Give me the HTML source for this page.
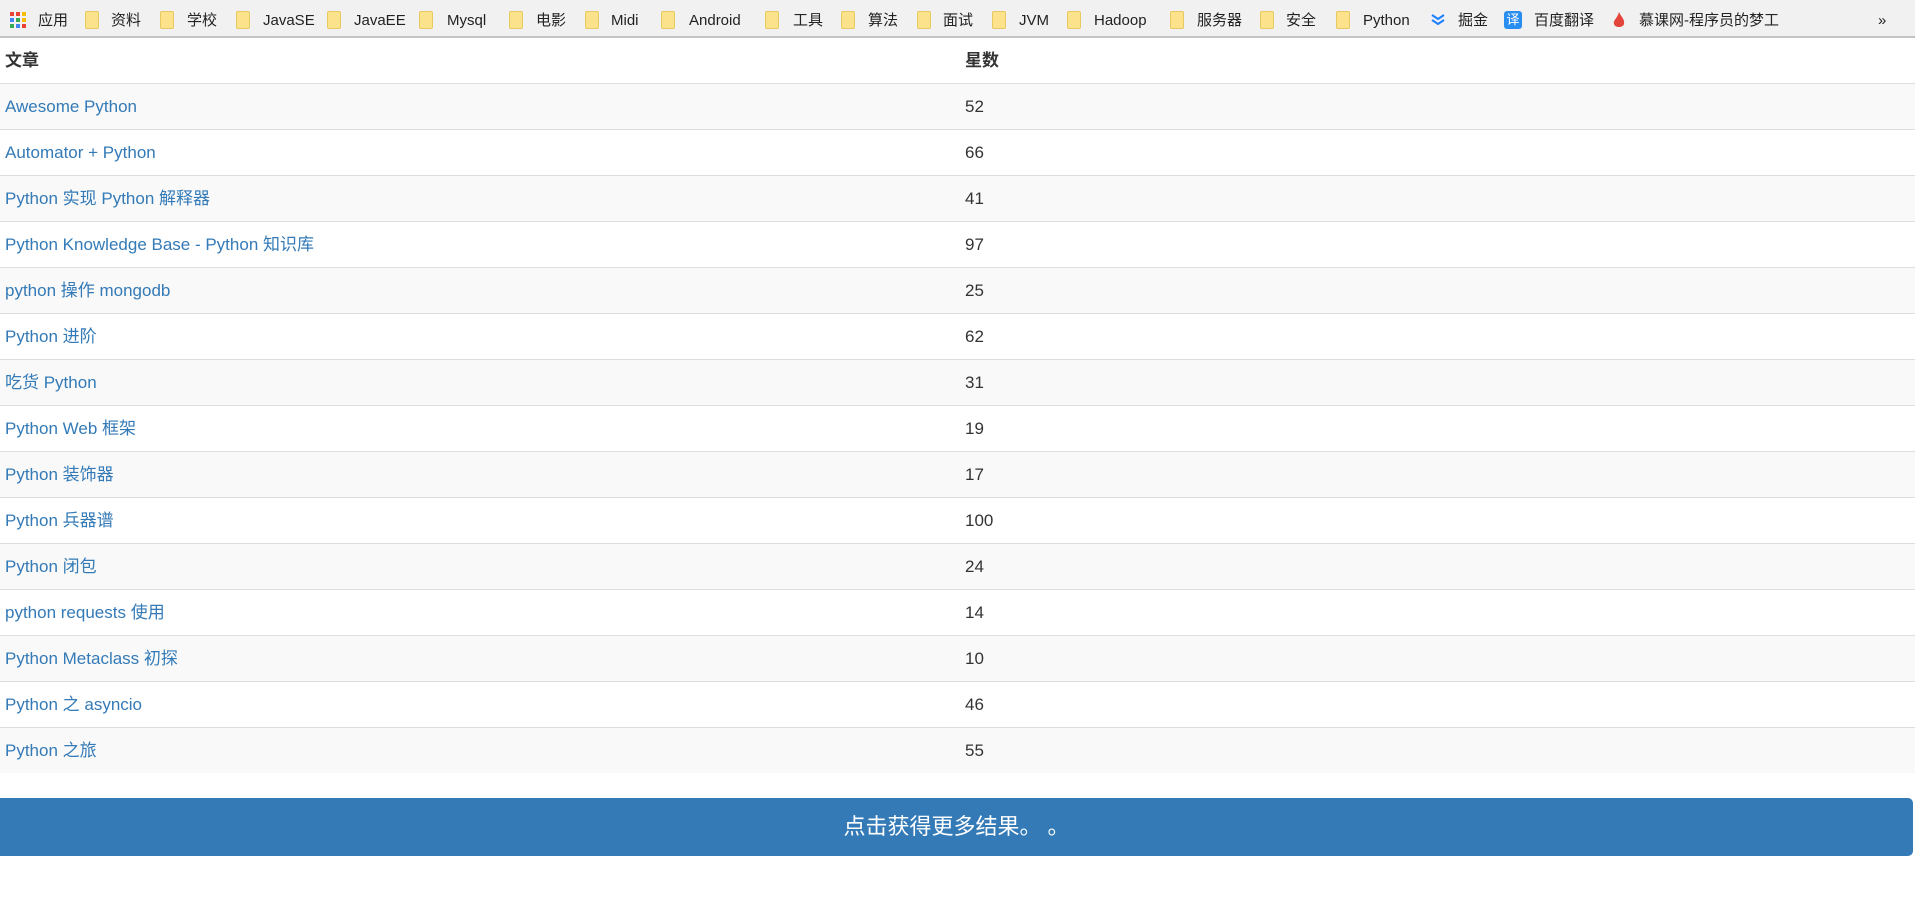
<!DOCTYPE html>
<html><head><meta charset="utf-8"><style>
*{margin:0;padding:0;box-sizing:border-box}
body{width:1915px;height:905px;background:#fff;font-family:"Liberation Sans","Noto Sans CJK SC",sans-serif;overflow:hidden;position:relative}
#bar{position:absolute;left:0;top:0;width:1915px;height:38px;background:#f1f1f1;border-bottom:2px solid #c4c4c4}
#bar span{position:absolute;top:11px;font-size:15px;color:#222;line-height:20px;height:20px;white-space:nowrap}
#bar i{position:absolute;top:11px;width:14px;height:18px;background:#fce28a;border:1px solid #e8c860;border-radius:2px}
.tbl{position:absolute;left:0;top:38px;width:1915px;font-size:17px}
.r{position:relative;height:46px;border-top:1px solid #ddd}
.r.h{height:45px;border-top:none;font-weight:bold;color:#333}
.r.g{background:#f9f9f9}
.c1,.c2{position:absolute;top:13px;height:20px;line-height:20px;white-space:nowrap}
.c1{left:5px;color:#337ab7}
.c2{left:965px;color:#333}
.h .c1{color:#333}
#btn{position:absolute;left:0;top:798px;width:1913px;height:58px;background:#337ab7;border-radius:0 5px 5px 0;color:#fff;font-size:22px;text-align:center;line-height:58px}
</style></head><body>
<div id="bar">
<svg style="position:absolute;left:10px;top:12px" width="16" height="16"><g>
<rect x="0" y="0" width="4" height="4" fill="#ea4335"/><rect x="6" y="0" width="4" height="4" fill="#ea4335"/><rect x="12" y="0" width="4" height="4" fill="#fbbc05"/>
<rect x="0" y="6" width="4" height="4" fill="#4285f4"/><rect x="6" y="6" width="4" height="4" fill="#34a853"/><rect x="12" y="6" width="4" height="4" fill="#fbbc05"/>
<rect x="0" y="12" width="4" height="4" fill="#34a853"/><rect x="6" y="12" width="4" height="4" fill="#4285f4"/><rect x="12" y="12" width="4" height="4" fill="#ea4335"/></g></svg>
<span style="left:38px">应用</span>
<i style="left:85px"></i><span style="left:111px">资料</span>
<i style="left:160px"></i><span style="left:187px">学校</span>
<i style="left:236px"></i><span style="left:263px">JavaSE</span>
<i style="left:327px"></i><span style="left:354px">JavaEE</span>
<i style="left:419px"></i><span style="left:447px">Mysql</span>
<i style="left:509px"></i><span style="left:536px">电影</span>
<i style="left:585px"></i><span style="left:611px">Midi</span>
<i style="left:661px"></i><span style="left:689px">Android</span>
<i style="left:765px"></i><span style="left:793px">工具</span>
<i style="left:841px"></i><span style="left:868px">算法</span>
<i style="left:917px"></i><span style="left:943px">面试</span>
<i style="left:992px"></i><span style="left:1019px">JVM</span>
<i style="left:1067px"></i><span style="left:1094px">Hadoop</span>
<i style="left:1170px"></i><span style="left:1197px">服务器</span>
<i style="left:1260px"></i><span style="left:1286px">安全</span>
<i style="left:1336px"></i><span style="left:1363px">Python</span>
<svg style="position:absolute;left:1430px;top:12px" width="16" height="16"><path d="M2 3l6 4 6-4M2 8l6 4 6-4" stroke="#1e80ff" stroke-width="2" fill="none"/></svg>
<span style="left:1458px">掘金</span>
<div style="position:absolute;left:1504px;top:11px;width:18px;height:18px;background:#2a8ef0;border-radius:3px;color:#fff;font-size:13px;text-align:center;line-height:18px">译</div>
<span style="left:1534px">百度翻译</span>
<svg style="position:absolute;left:1612px;top:11px" width="14" height="18"><path d="M7 1C9 6 13 8 12 13 11 17 3 17 2 13 1 9 5 8 7 1Z" fill="#e4453a"/></svg>
<span style="left:1639px">慕课网-程序员的梦工</span>
<span style="left:1878px">»</span>
</div>
<div class="tbl">
<div class="r h"><span class="c1">文章</span><span class="c2">星数</span></div>
<div class="r g"><span class="c1">Awesome Python</span><span class="c2">52</span></div>
<div class="r"><span class="c1">Automator + Python</span><span class="c2">66</span></div>
<div class="r g"><span class="c1">Python 实现 Python 解释器</span><span class="c2">41</span></div>
<div class="r"><span class="c1">Python Knowledge Base - Python 知识库</span><span class="c2">97</span></div>
<div class="r g"><span class="c1">python 操作 mongodb</span><span class="c2">25</span></div>
<div class="r"><span class="c1">Python 进阶</span><span class="c2">62</span></div>
<div class="r g"><span class="c1">吃货 Python</span><span class="c2">31</span></div>
<div class="r"><span class="c1">Python Web 框架</span><span class="c2">19</span></div>
<div class="r g"><span class="c1">Python 装饰器</span><span class="c2">17</span></div>
<div class="r"><span class="c1">Python 兵器谱</span><span class="c2">100</span></div>
<div class="r g"><span class="c1">Python 闭包</span><span class="c2">24</span></div>
<div class="r"><span class="c1">python requests 使用</span><span class="c2">14</span></div>
<div class="r g"><span class="c1">Python Metaclass 初探</span><span class="c2">10</span></div>
<div class="r"><span class="c1">Python 之 asyncio</span><span class="c2">46</span></div>
<div class="r g"><span class="c1">Python 之旅</span><span class="c2">55</span></div>
</div>
<div id="btn">点击获得更多结果。&nbsp;。</div>
</body></html>
